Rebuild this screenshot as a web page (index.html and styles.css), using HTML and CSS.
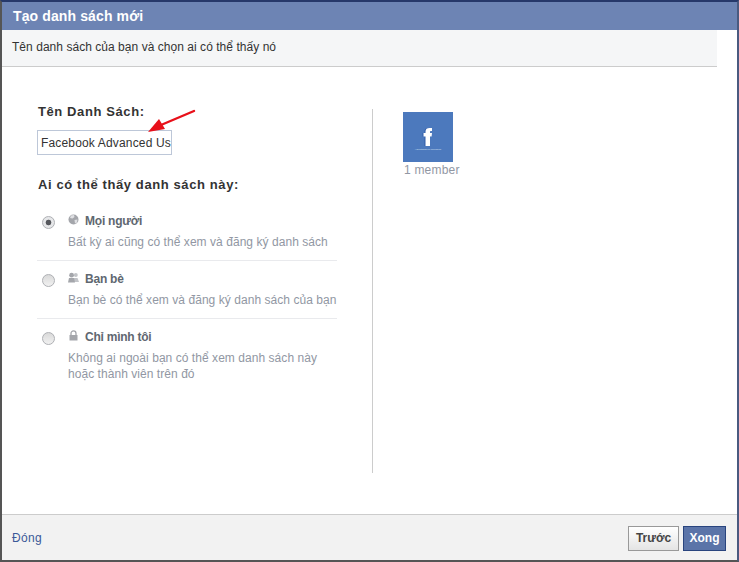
FILE: index.html
```html
<!DOCTYPE html>
<html>
<head>
  <title>Tạo danh sách mới</title>
  <link rel="stylesheet" href="styles.css">
</head>
<body>
  <div class="dialog">
    <div class="dialogTitle">Tạo danh sách mới</div>
    <div class="dialogSub">Tên danh sách của bạn và chọn ai có thể thấy nó</div>

    <div class="dialogBody">
      <div class="formCol">
        <div class="nameLabel">Tên Danh Sách:</div>
        <div class="nameInput">Facebook Advanced Us</div>
        <svg class="arrow" width="52" height="26" viewBox="0 0 52 26">
          <path d="M48 2 L15 16" stroke="#e8101a" stroke-width="2.4" stroke-linecap="round" fill="none"/>
          <path d="M2 23 L13 10 L19 20 Z" fill="#e8101a"/>
        </svg>

        <div class="whoLabel">Ai có thể thấy danh sách này:</div>

        <div class="option">
          <span class="radio checked"></span>
          <div class="optionText">
            <div class="optionName">
              <svg class="optionIcon" width="11" height="11" viewBox="0 0 11 11">
                <circle cx="5.5" cy="5.5" r="5" fill="#a4a6ab"/>
                <path d="M3 1.5 L6 1 L6.5 3 L4.5 4.5 L2 4 Z M6.5 6 L9.5 5.5 L9 8.5 L7 9.5 Z" fill="#dfe0e3"/>
              </svg>
              Mọi người
            </div>
            <div class="optionDesc">Bất kỳ ai cũng có thể xem và đăng ký danh sách</div>
          </div>
        </div>

        <div class="option">
          <span class="radio"></span>
          <div class="optionText">
            <div class="optionName">
              <svg class="optionIcon" width="11" height="11" viewBox="0 0 11 11">
                <circle cx="7.8" cy="3" r="2" fill="#c2c4c8"/>
                <path d="M5.5 10 L6 6 L9.5 6 L11 10 Z" fill="#c2c4c8"/>
                <circle cx="3.6" cy="3.2" r="2.4" fill="#a4a6ab"/>
                <path d="M0 10.5 L1 6 L6 6 L7 10.5 Z" fill="#a4a6ab"/>
              </svg>
              Bạn bè
            </div>
            <div class="optionDesc">Bạn bè có thể xem và đăng ký danh sách của bạn</div>
          </div>
        </div>

        <div class="option">
          <span class="radio"></span>
          <div class="optionText">
            <div class="optionName">
              <svg class="optionIcon" width="11" height="11" viewBox="0 0 11 11">
                <path d="M3 5 V3.4 a2.5 2.5 0 0 1 5 0 V5" stroke="#a4a6ab" stroke-width="1.3" fill="none"/>
                <rect x="1.5" y="5" width="8" height="5.5" fill="#a4a6ab"/>
              </svg>
              Chỉ mình tôi
            </div>
            <div class="optionDesc">Không ai ngoài bạn có thể xem danh sách này<br>hoặc thành viên trên đó</div>
          </div>
        </div>
      </div>

      <div class="memberCol">
        <div class="memberPic">
          <svg width="50" height="50" viewBox="0 0 50 50">
            <path d="M21.500 34 V24.500 H19.500 V21 H21.500 V19.500 C21.500 17 23 16 25.500 16 H28 V19 H27 C26.200 19 26 19.500 26 20 V21 H28 L27.600 24.500 H26 V34 Z" fill="#2f5aa6"/>
            <path d="M22.500 34 V24.500 H20.500 V21 H22.500 V19.500 C22.500 17 24 16 26.500 16 H29 V19 H28 C27.200 19 27 19.500 27 20 V21 H29 L28.600 24.500 H27 V34 Z" fill="#ffffff"/>
            <text class="picTag" x="25" y="38" text-anchor="middle">Advertising on Facebook</text>
          </svg>
        </div>
        <div class="memberCount">1 member</div>
      </div>
    </div>

    <div class="dialogFooter">
      <a class="closeLink" href="#">Đóng</a>
      <div class="buttons">
        <button class="btn">Trước</button>
        <button class="btn primary">Xong</button>
      </div>
    </div>
  </div>
</body>
</html>
```

FILE: styles.css
```css
html, body {
  margin: 0;
  padding: 0;
}
body {
  font-family: "Liberation Sans", Arial, sans-serif;
  background: #fff;
  color: #333;
}
.dialog {
  width: 739px;
  height: 562px;
  box-sizing: border-box;
  display: flex;
  flex-direction: column;
  border-style: solid;
  border-color: #26386a #4a5a80 #555 #555;
  border-width: 2px;
  background: #fff;
  overflow: hidden;
}
.dialogTitle {
  height: 28px;
  line-height: 28px;
  padding-left: 11px;
  background: #6d84b4;
  color: #fff;
  font-size: 14px;
  font-weight: bold;
  letter-spacing: 0.12px;
}
.dialogSub {
  width: 705px;
  height: 36px;
  line-height: 35px;
  padding-left: 10px;
  background: #f5f6f7;
  border-bottom: 1px solid #ccc;
  font-size: 12px;
  letter-spacing: 0.04px;
  color: #333;
}
.dialogBody {
  flex: 1;
  display: flex;
  padding-top: 42px;
}
.formCol {
  position: relative;
  width: 300px;
  margin-left: 35px;
}
.nameLabel {
  margin: -5px 0 0 1px;
  font-size: 13px;
  line-height: 16px;
  font-weight: bold;
  letter-spacing: 0.6px;
  color: #333;
}
.nameInput {
  width: 135px;
  height: 25px;
  margin-top: 10px;
  padding: 0 1px 0 3px;
  box-sizing: border-box;
  line-height: 25px;
  border: 1px solid #bdc7d8;
  font-size: 12px;
  letter-spacing: 0.16px;
  color: #333;
  white-space: nowrap;
  overflow: hidden;
}
.arrow {
  position: absolute;
  left: 109px;
  top: 0;
}
.whoLabel {
  margin: 22px 0 21px 1px;
  font-size: 13px;
  line-height: 16px;
  font-weight: bold;
  letter-spacing: 0.6px;
  color: #333;
}
.option {
  display: flex;
  height: 46px;
  margin-bottom: 11px;
  border-bottom: 1px solid #e9eaed;
}
.option:last-child {
  border-bottom: none;
}
.radio {
  width: 13px;
  height: 13px;
  box-sizing: border-box;
  margin: 2px 0 0 5px;
  border-radius: 50%;
  border: 1px solid #aeb0b4;
  background: linear-gradient(#d9d9d9, #f1f1f1);
  flex: none;
}
.radio.checked {
  background: radial-gradient(circle, #55575c 0, #55575c 2.5px, #e6e7e9 3.2px);
}
.optionText {
  margin-left: 13px;
  white-space: nowrap;
}
.optionName {
  font-size: 12px;
  font-weight: bold;
  line-height: 15px;
  letter-spacing: -0.25px;
  color: #606770;
}
.optionIcon {
  vertical-align: 0;
  margin-right: 3px;
}
.optionDesc {
  margin-top: 5px;
  font-size: 12px;
  line-height: 16px;
  letter-spacing: 0.05px;
  color: #9197a3;
}
.memberCol {
  height: 361px;
  margin-left: 35px;
  padding: 3px 0 0 30px;
  border-left: 1px solid #ccc;
}
.memberPic {
  width: 50px;
  height: 50px;
  background: #4c79bd;
}
.memberPic svg {
  display: block;
}
.picTag {
  font-size: 2.4px;
  fill: #dce6f4;
}
.memberCount {
  margin: 1px 0 0 1px;
  font-size: 12px;
  line-height: 14px;
  letter-spacing: 0.2px;
  color: #9197a3;
}
.dialogFooter {
  height: 45px;
  display: flex;
  align-items: center;
  justify-content: space-between;
  padding: 0 11px 0 10px;
  background: #f2f2f2;
  border-top: 1px solid #ccc;
}
.closeLink {
  font-size: 12px;
  letter-spacing: 0.3px;
  color: #3b5998;
  text-decoration: none;
}
.buttons {
  display: flex;
  gap: 4px;
  margin-top: 1px;
}
.btn {
  width: 51px;
  height: 25px;
  padding: 0;
  box-sizing: border-box;
  font-family: "Liberation Sans", Arial, sans-serif;
  font-size: 12px;
  font-weight: bold;
  color: #444;
  background: linear-gradient(#fff, #e4e4e4);
  border: 1px solid #999;
}
.btn.primary {
  width: 43px;
  color: #fff;
  background: #5b74a8;
  border-color: #29447e;
}
```
